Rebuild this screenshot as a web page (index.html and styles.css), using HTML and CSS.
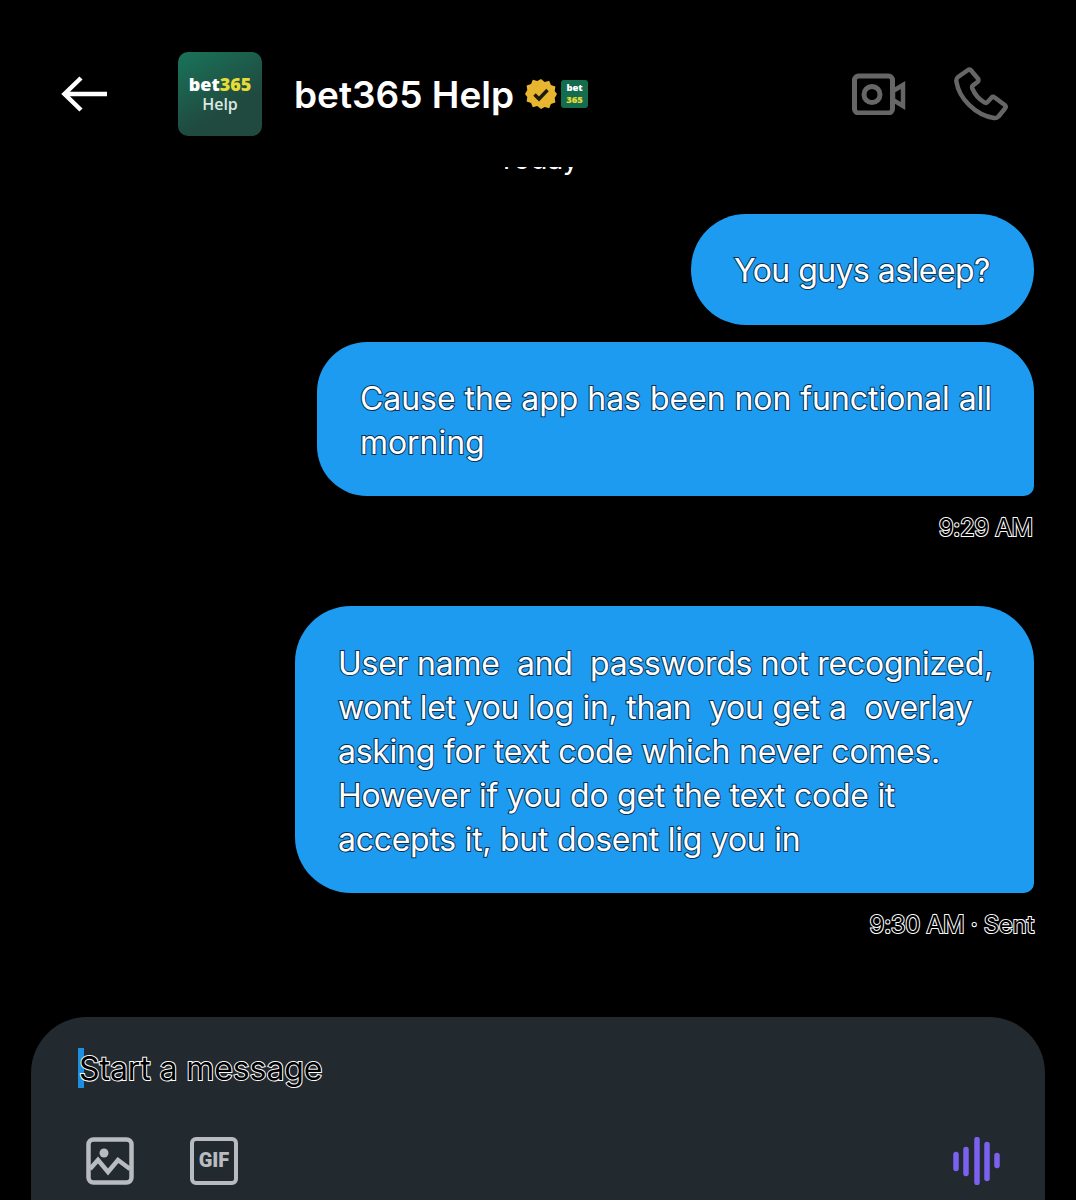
FILE: index.html
```html
<!DOCTYPE html>
<html lang="en">
<head>
    <meta charset="UTF-8">
    <meta name="viewport" content="width=device-width, initial-scale=1.0">
    <title>bet365 Help</title>
    <link rel="stylesheet" href="styles.css">
</head>
<body>
    <div class="screen">
        <header class="topbar">
            <svg class="back-icon" viewBox="0 0 48 36" width="48" height="36">
                <path d="M46 18H4M20 2 3.500 18 20 34" fill="none" stroke="#fff" stroke-width="4.500"/>
            </svg>
            <div class="avatar">
                <div class="avatar-brand">bet<span class="yellow">365</span></div>
                <div class="avatar-help">Help</div>
            </div>
            <h1 class="name">bet365 Help</h1>
            <svg class="verified" viewBox="0 0 32 32" width="32" height="32">
                <path d="M16 1l3.700 3 4.500-1.300 1.700 4.400 4.500 1.300-.7 4.700L32 16l-2.300 3.900.7 4.700-4.500 1.300-1.700 4.400-4.500-1.300L16 31l-3.700-3-4.500 1.300-1.700-4.400-4.500-1.300.7-4.700L0 16l2.300-3.900-.7-4.700 4.500-1.300 1.700-4.400 4.500 1.300z" fill="#e8b52e"/>
                <path d="M9.500 16.500l4.500 4.500 8.500-9" fill="none" stroke="#1d1a10" stroke-width="3.500"/>
            </svg>
            <div class="mini-badge">bet<span class="yellow">365</span></div>
            <div class="top-actions">
                <svg viewBox="0 0 54 42" width="54" height="42">
                    <rect x="2.500" y="3" width="38" height="37" rx="4" fill="none" stroke="#666" stroke-width="5"/>
                    <circle cx="20" cy="21.500" r="8" fill="none" stroke="#666" stroke-width="5"/>
                    <path d="M41 18l10-6v21l-10-6z" fill="none" stroke="#666" stroke-width="4.500"/>
                </svg>
                <svg viewBox="0 0 54 54" width="54" height="54">
                    <path d="M14 3 4 10c-1.500 1-2 2.500-1.500 5C5 31 21 48 40 51c2 .3 3.500-.5 4.500-1.500l6.500-8c1-1.300.8-2.500-.3-3.500l-10-7.500c-1.200-.8-2.300-.7-3.200.2l-4 4.300c-1 1-2 1.100-3.200.4-5-3-10-9-12-14-.5-1.300-.3-2.300.7-3l4.500-3.400c1-.9 1.200-2 .6-3.200L17.500 4c-.8-1.300-2.300-1.800-3.500-1z" fill="none" stroke="#666" stroke-width="4.500" stroke-linejoin="round"/>
                </svg>
            </div>
        </header>

        <div class="day-clip"><span>Today</span></div>

        <main class="thread">
            <div class="bubble bubble-round">You guys asleep?</div>
            <div class="bubble bubble-tail bubble-second">Cause the app has been non functional all<br>morning</div>
            <div class="stamp">9:29 AM</div>
            <div class="bubble bubble-tail bubble-third">User name&nbsp; and&nbsp; passwords not recognized,<br>wont let you log in, than&nbsp; you get a&nbsp; overlay<br>asking for text code which never comes.<br>However if you do get the text code it<br>accepts it, but dosent lig you in</div>
            <div class="stamp stamp-sent">9:30 AM · Sent</div>
        </main>

        <footer class="composer">
            <div class="input-line"><span class="caret"></span><span class="placeholder">Start a message</span></div>
            <div class="tools">
                <svg viewBox="0 0 48 48" width="48" height="48">
                    <rect x="2.500" y="2.500" width="43" height="43" rx="5" fill="none" stroke="#b8bcc0" stroke-width="4.500"/>
                    <circle cx="18" cy="16" r="4.500" fill="#b8bcc0"/>
                    <path d="M4 32l8-9 10 12 10-12 12 9" fill="none" stroke="#b8bcc0" stroke-width="4.500"/>
                </svg>
                <div class="gif-icon">GIF</div>
                <svg class="voice-icon" viewBox="0 0 48 48" width="48" height="48">
                    <g fill="none" stroke="#7b61f0" stroke-linecap="round" stroke-width="5.500">
                        <path d="M3 17.500v14M13 12.500v24M24 2.500v43M34 7.500v34M44 18.500v10"/>
                    </g>
                </svg>
            </div>
        </footer>
    </div>
</body>
</html>
```

FILE: styles.css
```css
* {
    box-sizing: border-box;
    margin: 0;
    padding: 0;
}

html, body {
    background: #000;
}

body {
    font-family: Inter, "Liberation Sans", sans-serif;
    color: #fff;
}

.screen {
    width: 1076px;
    height: 1200px;
    overflow: hidden;
    display: flex;
    flex-direction: column;
}

.yellow {
    color: #e6dc35;
}

/* top bar */
.topbar {
    height: 158px;
    margin-bottom: 9px;
    display: flex;
    align-items: center;
    padding: 30px 68px 0 61px;
}

.avatar {
    width: 84px;
    height: 84px;
    margin-left: 69px;
    border-radius: 10px;
    background: linear-gradient(150deg, #19745a, #204a3f 65%);
    display: flex;
    flex-direction: column;
    align-items: center;
    justify-content: center;
    font-family: "Open Sans", sans-serif;
}

.avatar-brand {
    font-size: 18px;
    line-height: 20px;
    font-weight: 800;
}

.avatar-help {
    font-size: 16px;
    line-height: 21px;
    font-weight: 600;
    color: #dbe7e1;
}

.name {
    margin-left: 32px;
    font-size: 37px;
    font-weight: 600;
}

.verified {
    margin-left: 11px;
}

.mini-badge {
    width: 27px;
    height: 28px;
    margin-left: 4px;
    padding-top: 2px;
    border-radius: 3px;
    background: #156b4d;
    font-family: "Open Sans", sans-serif;
    font-size: 9.500px;
    font-weight: 800;
    line-height: 12px;
    text-align: center;
}

.mini-badge .yellow {
    display: block;
}

.top-actions {
    margin-left: auto;
    display: flex;
    align-items: center;
    gap: 48px;
}

/* cut off date label under the top bar */
.day-clip {
    height: 8px;
    overflow: hidden;
    display: flex;
    justify-content: center;
}

.day-clip span {
    font-size: 28px;
    line-height: 28px;
    margin-top: -22px;
}

/* messages */
.thread {
    height: 842px;
    padding: 39px 42px 0 0;
    display: flex;
    flex-direction: column;
    align-items: flex-end;
}

.bubble {
    background: #1d9bf0;
    font-size: 32px;
    line-height: 44px;
    letter-spacing: -0.27px;
    padding: 35px 40px 35px 43px;
    border-radius: 50px;
    white-space: nowrap;
    -webkit-text-stroke: 2px #0a3050;
    paint-order: stroke fill;
}

.bubble-round {
    height: 111px;
    width: 343px;
    border-radius: 55px;
    letter-spacing: -0.55px;
}

.bubble-tail {
    border-bottom-right-radius: 10px;
}

.bubble-second {
    margin-top: 17px;
    width: 717px;
    height: 154px;
    letter-spacing: -0.05px;
}

.bubble-third {
    margin-top: 63px;
    width: 739px;
    height: 287px;
    padding-top: 36px;
    border-radius: 56px 56px 10px 56px;
}

.stamp {
    margin-top: 17px;
    margin-right: 1px;
    font-size: 24px;
    line-height: 30px;
    letter-spacing: -0.3px;
    color: #000;
    -webkit-text-stroke: 2px #fff;
    paint-order: stroke fill;
    opacity: 0.99;
}

.stamp-sent {
    margin-right: 0;
}

/* message box */
.composer {
    margin: 0 31px;
    height: 183px;
    background: #22292f;
    border-radius: 56px 56px 0 0;
    padding: 31px 44px 0 47px;
}

.input-line {
    display: flex;
    align-items: center;
    height: 40px;
}

.caret {
    width: 6px;
    height: 40px;
    background: #1d8fe0;
}

.placeholder {
    margin-left: -5px;
    font-size: 32px;
    letter-spacing: -0.1px;
    color: #000;
    -webkit-text-stroke: 2px #fff;
    paint-order: stroke fill;
    opacity: 0.99;
}

.tools {
    margin-top: 49px;
    display: flex;
    align-items: center;
    padding-left: 8px;
    gap: 56px;
}

.gif-icon {
    width: 48px;
    height: 48px;
    border: 4.500px solid #b8bcc0;
    border-radius: 6px;
    color: #b8bcc0;
    font-family: Roboto, sans-serif;
    font-size: 20px;
    font-weight: 900;
    text-align: center;
    line-height: 39px;
}

.voice-icon {
    margin-left: auto;
}
```
